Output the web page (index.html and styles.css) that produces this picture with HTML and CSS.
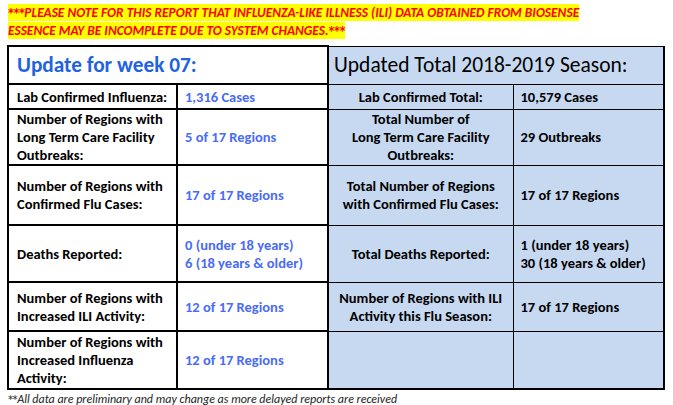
FILE: index.html
```html
<!DOCTYPE html>
<html>
<head>
<meta charset="utf-8">
<link rel="stylesheet" href="styles.css">
</head>
<body>
<div class="notice"><span class="hl"><span class="ast">***</span>PLEASE NOTE FOR THIS REPORT THAT INFLUENZA-LIKE ILLNESS (ILI) DATA OBTAINED FROM BIOSENSE<br>ESSENCE MAY BE INCOMPLETE DUE TO SYSTEM CHANGES.<span class="ast">***</span></span></div>
<table class="report">
  <colgroup>
    <col class="c1"><col class="c2"><col class="c3"><col class="c4">
  </colgroup>
  <tr class="r-head">
    <td class="l head-left" colspan="2">Update for week 07:</td>
    <td class="r head-right edge" colspan="2">Updated Total 2018-2019 Season:</td>
  </tr>
  <tr class="r-1">
    <td class="l lab">Lab Confirmed Influenza:</td>
    <td class="l val">1,316 Cases</td>
    <td class="r lab">Lab Confirmed Total:</td>
    <td class="r val edge">10,579 Cases</td>
  </tr>
  <tr class="r-2">
    <td class="l lab">Number of Regions with Long Term Care Facility Outbreaks:</td>
    <td class="l val">5 of 17 Regions</td>
    <td class="r lab">Total Number of<br>Long Term Care Facility<br>Outbreaks:</td>
    <td class="r val edge">29 Outbreaks</td>
  </tr>
  <tr class="r-3">
    <td class="l lab">Number of Regions with Confirmed Flu Cases:</td>
    <td class="l val">17 of 17 Regions</td>
    <td class="r lab">Total Number of Regions<br>with Confirmed Flu Cases:</td>
    <td class="r val edge">17 of 17 Regions</td>
  </tr>
  <tr class="r-4">
    <td class="l lab">Deaths Reported:</td>
    <td class="l val">0 (under 18 years)<br>6 (18 years &amp; older)</td>
    <td class="r lab">Total Deaths Reported:</td>
    <td class="r val edge">1 (under 18 years)<br>30 (18 years &amp; older)</td>
  </tr>
  <tr class="r-5">
    <td class="l lab">Number of Regions with Increased ILI Activity:</td>
    <td class="l val">12 of 17 Regions</td>
    <td class="r lab">Number of Regions with ILI<br>Activity this Flu Season:</td>
    <td class="r val edge">17 of 17 Regions</td>
  </tr>
  <tr class="r-6">
    <td class="l lab">Number of Regions with Increased Influenza Activity:</td>
    <td class="l val">12 of 17 Regions</td>
    <td class="r lab bottom"></td>
    <td class="r val edge bottom"></td>
  </tr>
</table>
<div class="footnote"><span class="ast">**</span>All data are preliminary and may change as more delayed reports are received</div>
</body>
</html>
```
FILE: styles.css
```css
html, body {
  margin: 0;
  padding: 0;
  background: #ffffff;
}
body {
  font-family: Carlito, Lato, "Open Sans", sans-serif;
  color: #000;
}
.notice {
  padding: 4px 0 0 8px;
  font-size: 13.4px;
  line-height: 18px;
  font-weight: bold;
  font-style: italic;
  color: #ff0000;
}
.hl {
  background: #ffff00;
}
.ast {
  font-family: "DejaVu Sans", sans-serif;
  font-size: 0.85em;
  letter-spacing: -0.5px;
}
.report {
  margin: 5px 0 0 7px;
  border-collapse: collapse;
  table-layout: fixed;
  width: 656px;
  font-size: 14.5px;
  line-height: 18px;
  font-weight: bold;
}
.c1 { width: 169px; }
.c2 { width: 151px; }
.c3 { width: 185px; }
.c4 { width: 151px; }
.report td {
  padding: 0;
  vertical-align: middle;
}
.l {
  border: 2px solid #000;
  background: #fff;
}
.r {
  border: 1px solid #000;
  background: #c6d9f1;
}
.r.edge { border-right-width: 2px; }
.r.bottom { border-bottom-width: 2px; }
.r-head { height: 38px; }
.r-1 { height: 25px; }
.r-2 { height: 56px; }
.r-3 { height: 60px; }
.r-4 { height: 57px; }
.r-5 { height: 49px; }
.r-6 { height: 58px; }
.report .head-left {
  font-size: 21.3px;
  color: #1f63e0;
  padding-left: 8px;
}
.report .head-right {
  font-size: 21.5px;
  font-weight: normal;
  padding-left: 5px;
}
.report .l.lab { padding-left: 8px; padding-right: 2px; }
.report .l.val { padding-left: 7px; color: #4a6cf7; }
.report .r.lab { text-align: center; }
.report .r.val { padding-left: 7px; }
.footnote {
  padding-left: 8px;
  font-size: 12px;
  line-height: 14px;
  font-style: italic;
  color: #222;
  margin-top: 2px;
}
```
